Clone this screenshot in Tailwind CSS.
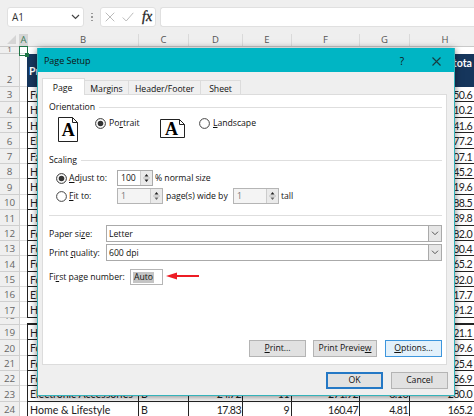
<!DOCTYPE html>
<html lang="en">
<head>
<meta charset="utf-8">
<title>Page Setup</title>
<script src="https://cdn.jsdelivr.net/npm/@tailwindcss/browser@4"></script>
</head>
<body class="relative w-[474px] h-[416px] overflow-hidden bg-[#efefef] font-['Open_Sans','Noto_Sans',sans-serif] text-[#333]">
<!-- formula bar -->
<header class="flex h-[34px] pt-[7px] pl-[7px]">
  <div class="flex items-center justify-between w-[77px] h-[20px] bg-white rounded-[3px] border border-[#e0e0e0] pl-[4px] pr-[3px] text-[10px]"><span>A1</span>
    <svg width="9" height="6" viewBox="0 0 9 6" fill="none" stroke="#444" stroke-width="1.2"><path d="M1 1l3.500 3.500L8 1"/></svg></div>
  <div class="flex flex-col gap-[2px] items-center justify-center w-[16px] h-[20px]"><i class="size-[1.500px] bg-[#999]"></i><i class="size-[1.500px] bg-[#999]"></i><i class="size-[1.500px] bg-[#999]"></i></div>
  <div class="flex items-center w-[56px] h-[20px] bg-white rounded-[3px] border border-[#e0e0e0] pl-[4px]">
    <svg class="shrink-0" width="10" height="10" viewBox="0 0 10 10" stroke="#bbb" fill="none"><path d="M.7.700l8.600 8.600M9.300.7L.7 9.300"/></svg>
    <svg class="ml-[7px] shrink-0" width="12" height="10" viewBox="0 0 12 10" stroke="#bbb" fill="none"><path d="M.7 5.500L4.200 9L11.300.8"/></svg>
    <span class="ml-[8px] -mt-px font-['Liberation_Serif',serif] italic text-[14px] leading-[16px] text-[#222] [-webkit-text-stroke:0.3px_#222]">fx</span></div>
  <div class="ml-[4px] flex-1 h-[20px] bg-white rounded-l-[3px] border border-r-0 border-[#e0e0e0]"></div>
</header>
<!-- column letters -->
<div class="flex h-[13px] text-[9.500px] leading-[12px] text-center text-[#555] border-b border-[#c9c9c9]">
  <div class="w-[19px] flex justify-end items-end pr-[3px] pb-[2px]"><svg width="9" height="9"><path d="M9 0V9H0z" fill="#d5d5d5"/></svg></div>
  <div class="w-[9px] bg-[#d5d5d5] text-[#3e7d5b]">A</div>
  <div class="w-[111px] border-r border-[#dadada]">B</div>
  <div class="w-[50px] border-r border-[#dadada]">C</div>
  <div class="w-[54px] border-r border-[#dadada]">D</div>
  <div class="w-[49px] border-r border-[#dadada]">E</div>
  <div class="w-[68px] border-r border-[#dadada]">F</div>
  <div class="w-[50px] border-r border-[#dadada]">G</div>
  <div class="flex-1 pl-[6px]">H</div>
</div>
<main id="rows" class="bg-white text-[10.600px] font-['Lato','Open_Sans',sans-serif] text-[#222]"></main>
<!-- active cell outline -->
<div class="absolute left-[19px] top-[46px] w-[9px] h-[10px] border border-[#1f7547]"><i class="absolute -right-[2px] -bottom-[2px] size-[4px] bg-[#1f7547]"></i></div>

<!-- dialog -->
<section class="absolute left-[37px] top-[48px] w-[418px] h-[348px] flex flex-col bg-[#efefef] border border-[#34b3ba] shadow-[0_1px_7px_rgba(0,0,0,0.5)] text-[8.700px] leading-[12px] text-[#111] tracking-[-0.040px]">
  <div class="flex items-center h-[24px] shrink-0 -mt-px pt-[2px] pl-[6px] pr-[13px] bg-[#00b5c4]">
    <h1 class="flex-1 text-[9px]">Page Setup</h1><span class="text-[10px] mr-[28px]">?</span>
    <svg width="9" height="9" viewBox="0 0 9 9" stroke="#173b40" stroke-width="1.100"><path d="M.5.500l8 8M8.500.5l-8 8"/></svg>
  </div>
  <nav class="relative z-10 flex items-end h-[23px] shrink-0 pl-[4px] -mb-px text-center">
    <div class="w-[43px] h-[17px] pt-[3px] pr-[2px] bg-white border border-b-0 border-[#dcdcdc]">Page</div>
    <div class="w-[44px] h-[15px] pt-[2px] bg-[#f0f0f0] border border-l-0 border-[#dcdcdc]">Margins</div>
    <div class="w-[72px] h-[15px] pt-[2px] bg-[#f0f0f0] border border-l-0 border-[#dcdcdc]">Header/Footer</div>
    <div class="w-[40px] h-[15px] pt-[2px] bg-[#f0f0f0] border border-l-0 border-[#dcdcdc]">Sheet</div>
  </nav>
  <div class="flex flex-col h-[271px] shrink-0 ml-[4px] mr-[7px] bg-white border border-[#dcdcdc] pl-[6px] pr-[4px] pt-[6px]">
    <div class="flex items-center h-[12px] gap-[4px]"><span>Orientation</span><i class="flex-1 h-px bg-[#dedede]"></i></div>
    <div class="flex h-[41px] pt-[4px]">
      <svg class="ml-[9px]" width="21" height="25" viewBox="0 0 21 25"><path d="M.5.500H14.500L19.500 5.500V24.500H.5zM14.500.5V5.500H19.500" fill="#fff" stroke="#222"/><text x="10.300" y="18.500" text-anchor="middle" font-family="Liberation Serif" font-weight="bold" font-size="18">A</text></svg>
      <div class="flex h-[12px] items-center ml-[16px] w-[65px] gap-[3px]"><svg width="11" height="11"><circle cx="5.500" cy="5.500" r="4.900" fill="#fff" stroke="#333"/><circle cx="5.500" cy="5.500" r="2.800" fill="#333"/></svg><span>Po<u>r</u>trait</span></div>
      <svg class="mt-[2px]" width="26" height="20" viewBox="0 0 26 20"><path d="M.5.500H19.500L24.500 5.500V18.500H.5zM19.500 .5V5.500H24.500" fill="#fff" stroke="#222"/><text x="11.500" y="15.500" text-anchor="middle" font-family="Liberation Serif" font-weight="bold" font-size="18">A</text></svg>
      <div class="flex h-[12px] items-center ml-[13px] gap-[3px]"><svg width="11" height="11"><circle cx="5.500" cy="5.500" r="4.900" fill="#fff" stroke="#444"/></svg><span><u>L</u>andscape</span></div>
    </div>
    <div class="flex items-center h-[12px] gap-[4px]"><span>Scaling</span><i class="flex-1 h-px bg-[#dedede]"></i></div>
    <div class="flex items-center h-[18px] mt-[3px] pl-[7px]">
      <svg width="11" height="11"><circle cx="5.500" cy="5.500" r="4.900" fill="#fff" stroke="#333"/><circle cx="5.500" cy="5.500" r="2.800" fill="#333"/></svg>
      <span class="w-[47px] ml-[2px] whitespace-nowrap"><u>A</u>djust to:</span>
      <div class="flex items-center w-[36px] h-[16px] border border-[#aaa] pl-[3px] ml-[1px]"><span class="flex-1">100</span><div class="h-full w-[12px] bg-[#eaeaea] border-l border-[#ccc] flex items-center justify-center"><svg width="7" height="12" fill="#222"><path d="M3.500 2l2 2.500h-4zM3.500 10l2-2.500h-4z"/><path d="M0 5.500h7v1H0z" fill="#bbb"/></svg></div></div>
      <span class="ml-[2px]">% normal size</span>
    </div>
    <div class="flex items-center h-[18px] pl-[7px]">
      <svg width="11" height="11"><circle cx="5.500" cy="5.500" r="4.900" fill="#fff" stroke="#444"/></svg>
      <span class="w-[47px] ml-[2px]"><u>F</u>it to:</span>
      <div class="flex items-center w-[46px] h-[16px] border border-[#b5b5b5] bg-[#f4f4f4] text-[#777] pl-[3px] ml-[1px]"><span class="flex-1">1</span><div class="h-full w-[12px] bg-[#eaeaea] border-l border-[#ccc] flex items-center justify-center"><svg width="7" height="12" fill="#222"><path d="M3.500 2l2 2.500h-4z"/><path d="M3.500 10l2-2.500h-4z" fill="#666"/><path d="M0 5.500h7v1H0z" fill="#bbb"/></svg></div></div>
      <span class="ml-[3px] w-[67px] whitespace-nowrap">page(s) wide by</span>
      <div class="flex items-center w-[46px] h-[16px] border border-[#b5b5b5] bg-[#f4f4f4] text-[#777] pl-[3px]"><span class="flex-1">1</span><div class="h-full w-[12px] bg-[#eaeaea] border-l border-[#ccc] flex items-center justify-center"><svg width="7" height="12" fill="#222"><path d="M3.500 2l2 2.500h-4z"/><path d="M3.500 10l2-2.500h-4z" fill="#666"/><path d="M0 5.500h7v1H0z" fill="#bbb"/></svg></div></div>
      <span class="ml-[2px]">tall</span>
    </div>
    <i class="h-px mt-[10px] bg-[#dedede]"></i>
    <div class="flex items-center h-[17px] mt-[9px]"><span class="w-[57px]">Paper si<u>z</u>e:</span>
      <div class="flex items-center flex-1 h-full border border-[#aaa] pl-[2px]"><span class="flex-1">Letter</span><div class="w-[13px] h-full bg-[#e6e6e6] border-l border-[#aaa] flex items-center justify-center"><svg width="8" height="5" fill="none" stroke="#555"><path d="M1 .7l3 3 3-3"/></svg></div></div></div>
    <div class="flex items-center h-[17px] mt-[2px]"><span class="w-[57px] whitespace-nowrap">Print <u>q</u>uality:</span>
      <div class="flex items-center flex-1 h-full border border-[#aaa] pl-[2px]"><span class="flex-1">600 dpi</span><div class="w-[13px] h-full bg-[#e6e6e6] border-l border-[#aaa] flex items-center justify-center"><svg width="8" height="5" fill="none" stroke="#555"><path d="M1 .7l3 3 3-3"/></svg></div></div></div>
    <div class="flex items-center h-[16px] mt-[8px]"><span class="w-[81px] whitespace-nowrap">Fi<u>r</u>st page number:</span>
      <div class="flex items-center w-[33px] h-full border border-[#b5b5b5] pl-[2px]"><span class="bg-[#c4c4c4] px-px leading-[11px]">Auto</span></div>
      <svg class="ml-[3px] -mt-[3px]" width="34" height="8"><path d="M0 4L11 .5V3H33V5H11V7.500z" fill="#ed1c24"/></svg></div>
    <div class="flex h-[17px] mt-[55px] justify-end text-center leading-[15px]">
      <button class="w-[57px] bg-[#e1e1e1] border border-[#b4b4b4]"><u>P</u>rint...</button>
      <button class="w-[64px] ml-[7px] bg-[#e1e1e1] border border-[#b4b4b4] whitespace-nowrap">Print Previe<u>w</u></button>
      <button class="w-[57px] ml-[8px] bg-[#e3f1fb] border border-[#3d96dd]"><u>O</u>ptions...</button>
    </div>
  </div>
  <footer class="flex justify-end gap-[8px] pr-[6px] pt-[7px] text-center leading-[15px]">
    <button class="w-[57px] h-[17px] leading-[13px] bg-[#e1e1e1] border-2 border-[#2478c5]">OK</button>
    <button class="w-[57px] h-[17px] bg-[#e1e1e1] border border-[#b4b4b4]">Cancel</button>
  </footer>
</section>
<script>
// row number, column B, column H, then columns C to G
const data = [
 [3,'Fo','50.6'],[4,'H','10.2'],[5,'H','41.6'],[6,'El','77.2'],[7,'Fa','07.1'],
 [8,'H','45.2'],[9,'H','19.6'],[10,'H','88.5'],[11,'H','39.8'],[12,'Fo','82.0'],
 [13,'Fo','30.4'],[14,'Fo','65.2'],[15,'Fo','32.0'],[16,'El','17.7'],[17,'H','91.2'],
 null,
 [19,'H','21.1'],[20,'Fo','09.6'],[21,'Fo','25.4'],[22,'Fo','56.9'],
 [23,'Electronic Accessories','280.0','B','24.72','11','271.92','8.16'],[24,'Home &amp; Lifestyle','165.2','B','17.83','9','160.47','4.81']];
const num = n => `<div class="w-[20px] shrink-0 h-full bg-[#efefef] border-r border-b border-[#cfcfcf] text-center text-[9.800px] leading-[13px] text-[#666] font-['Open_Sans'] overflow-hidden flex items-end justify-center"><span>${n}</span></div><div class="w-[7px] shrink-0 h-full border-b border-[#ddd]"></div>`;
let h = `<div class="flex h-[7px]">${num('<span class="block text-[8px] leading-[8px]">1</span>')}</div>
<div class="flex h-[33px]">${num(2)}<div class="flex-1 bg-[#16365c] text-white font-bold flex justify-between pt-[11px] pl-[2px] pr-[2px] leading-[13px]"><span>Pr</span><span class="-mt-[8px]">tota</span></div></div>`;
for (const r of data) {
  if (!r) { h += `<div class="flex h-[7px]">${num('<span class="block mb-[2px]">18</span>')}<div class="flex-1 border-b-2 border-[#222]"></div></div>`; continue; }
  const [n,p,t,b='',d='',e='',f='',g=''] = r;
  h += `<div class="flex h-[15.4px] leading-[16px] text-right tracking-[-0.550px]">${num(`<span class="tracking-normal">${n}</span>`)}
   <div class="w-[112px] shrink-0 border-l border-r border-b border-[#222] text-left pl-[2px] whitespace-nowrap tracking-normal">${p}</div>
   <div class="w-[50px] shrink-0 border-r border-b border-[#222] text-left pl-[2px]">${b}</div>
   <div class="w-[54px] shrink-0 border-r border-b border-[#222] pr-px">${d}</div>
   <div class="w-[49px] shrink-0 border-r border-b border-[#222] pr-[2px]">${e}</div>
   <div class="w-[68px] shrink-0 border-r border-b border-[#222] pr-px">${f}</div>
   <div class="w-[50px] shrink-0 border-r border-b border-[#222] pr-px">${g}</div>
   <div class="w-[64px] shrink-0 border-b border-[#222] pr-[2px]">${t}</div></div>`;
}
document.getElementById('rows').innerHTML = h;
</script>
</body>
</html>
